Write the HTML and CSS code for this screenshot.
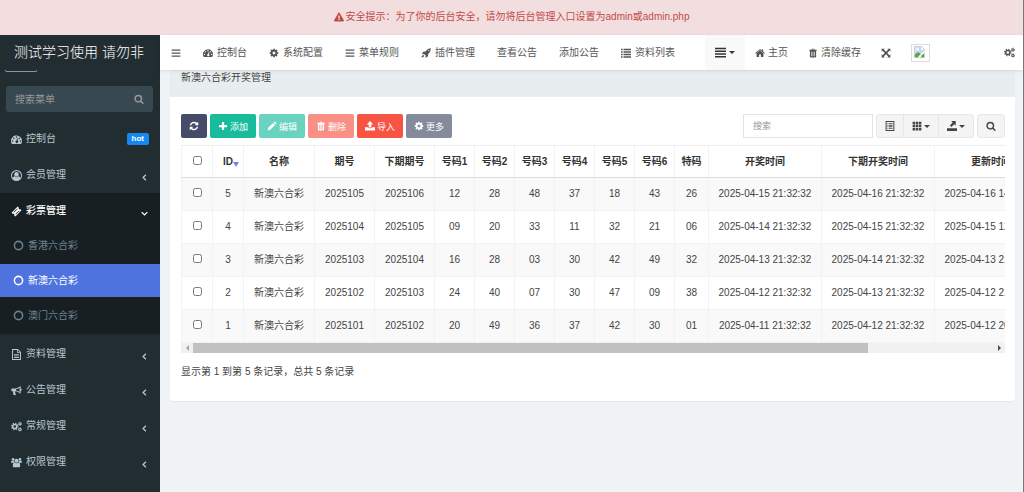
FILE: index.html
```html
<!DOCTYPE html>
<html lang="zh-CN">
<head>
    <meta charset="UTF-8">
    <meta name="viewport" content="width=device-width, initial-scale=1.0">
    <title>新澳六合彩开奖管理</title>
    <link rel="stylesheet" href="styles.css">
</head>
<body>
    <svg class="sprite" aria-hidden="true">
        <symbol id="warning" viewBox="0 0 576 512"><path d="M569.517 440.013C587.975 472.007 564.806 512 527.94 512H48.054c-36.937 0-59.999-40.055-41.577-71.987L246.423 23.985c18.467-32.009 64.72-31.951 83.154 0l239.94 416.028zM288 354c-25.405 0-46 20.595-46 46s20.595 46 46 46 46-20.595 46-46-20.595-46-46-46zm-43.673-165.346l7.418 136c.347 6.364 5.609 11.346 11.982 11.346h48.546c6.373 0 11.635-4.982 11.982-11.346l7.418-136c.375-6.874-5.098-12.654-11.982-12.654h-63.383c-6.884 0-12.356 5.78-11.981 12.654z"/></symbol>
        <symbol id="bars" viewBox="0 0 16 16"><path d="M1 2.2h14v2.2H1zM1 7h14v2.2H1zM1 11.8h14V14H1z"/></symbol>
        <symbol id="justify" viewBox="0 0 16 16"><path d="M0 1h16v2.3H0zM0 5h16v2.3H0zM0 9h16v2.3H0zM0 13h16v2.3H0z"/></symbol>
        <symbol id="list" viewBox="0 0 16 16"><path d="M0 1h2.6v2.4H0zM4 1h12v2.4H4zM0 5h2.6v2.4H0zM4 5h12v2.4H4zM0 9h2.6v2.4H0zM4 9h12v2.4H4zM0 13h2.6v2.4H0zM4 13h12v2.4H4z"/></symbol>
        <symbol id="dashboard" viewBox="0 0 16 16"><path fill-rule="evenodd" d="M8 2a8 8 0 0 1 8 8c0 1.500-.4 2.900-1.100 4.100-.2.300-.4.400-.7.400H1.800c-.3 0-.5-.1-.7-.4A8 8 0 0 1 8 2zM2.300 9a1.100 1.100 0 1 0 0 2.200 1.100 1.100 0 0 0 0-2.200zM4 5a1.100 1.100 0 1 0 0 2.200A1.100 1.100 0 0 0 4 5zm4-1.700a1.100 1.100 0 1 0 0 2.200 1.100 1.100 0 0 0 0-2.200zM12 5a1.100 1.100 0 1 0 0 2.200A1.100 1.100 0 0 0 12 5zm1.700 4a1.100 1.100 0 1 0 0 2.200 1.100 1.100 0 0 0 0-2.200zM9 6.500l-.8 3.100a1.800 1.800 0 1 0 1.300.3l.8-3.100z"/></symbol>
        <symbol id="cog" viewBox="0 0 1792 1792"><path d="M1152 896q0-106-75-181t-181-75-181 75-75 181 75 181 181 75 181-75 75-181zm512-109v222q0 12-8 23t-20 13l-185 28q-19 54-39 91 35 50 107 138 10 12 10 25t-9 23q-27 37-99 108t-94 71q-12 0-26-9l-138-108q-44 23-91 38-16 136-29 186-7 28-36 28h-222q-14 0-24.500-8.500t-11.500-21.500l-28-184q-49-16-90-37l-141 107q-10 9-25 9-14 0-25-11-126-114-165-168-7-10-7-23 0-12 8-23 15-21 51-66.500t54-70.500q-27-50-41-99l-183-27q-13-2-21-12.500t-8-23.500v-222q0-12 8-23t19-13l186-28q14-46 39-92-40-57-107-138-10-12-10-24 0-10 9-23 26-36 98.500-107.500t94.500-71.500q13 0 26 10l138 107q44-23 91-38 16-136 29-186 7-28 36-28h222q14 0 24.500 8.500t11.500 21.500l28 184q49 16 90 37l142-107q9-9 24-9 13 0 25 10 129 119 165 170 7 8 7 22 0 12-8 23-15 21-51 66.500t-54 70.500q26 50 41 98l183 28q13 2 21 12.500t8 23.500z"/></symbol>
        <symbol id="cogs" viewBox="0 0 16 16"><g fill="none" stroke="currentColor"><circle cx="5.500" cy="8" r="3" stroke-width="2.200"/><circle cx="5.500" cy="8" r="4.700" stroke-width="1.600" stroke-dasharray="1.900 1.790"/><circle cx="13" cy="4" r="1.600" stroke-width="1.500"/><circle cx="13" cy="4" r="2.600" stroke-width=".8" stroke-dasharray="1.360 1.360"/><circle cx="13" cy="12.300" r="1.600" stroke-width="1.500"/><circle cx="13" cy="12.300" r="2.600" stroke-width=".8" stroke-dasharray="1.360 1.360"/></g></symbol>
        <symbol id="rocket" viewBox="0 0 16 16"><path fill-rule="evenodd" d="M15.500.5c.2 3.800-.9 6.300-4 9.200l-.3 3.600-3.700 2.200-.5-.4.6-3-2.700-2.700-3 .6-.4-.5 2.200-3.700 3.600-.3C10 1.800 12.200.6 15.500.5zM12.400 2.600a1 1 0 1 0 0 2 1 1 0 0 0 0-2zM3.800 11l1.300 1.200c-.5 1.700-1.800 2.400-4.300 2.900.5-2.300 1.200-3.700 3-4.100z"/></symbol>
        <symbol id="home" viewBox="0 0 16 16"><path d="M8 3.800l5.500 4.600v5.300c0 .4-.3.600-.6.600H9.500v-4h-3v4H3.100c-.3 0-.6-.2-.6-.6V8.400zM8 1.500l2.700 2.200V2.200h2.300v3.500l2.700 2.300-.8 1L8 3.100 1.100 9l-.8-1z"/></symbol>
        <symbol id="trash" viewBox="0 0 16 16"><path fill-rule="evenodd" d="M6.300 1h3.400l1 1.800H14v1.700h-1v9.200c0 .8-.5 1.300-1.200 1.300H4.200C3.500 15 3 14.500 3 13.700V4.500H2V2.800h3.300zM7 2l-.4.800h2.800L9 2zM5.100 6v7h1V6zm2.400 0v7h1V6zm2.400 0v7h1V6z"/></symbol>
        <symbol id="expand" viewBox="0 0 16 16"><path d="M1 1h5L4.500 2.500 8 6l3.500-3.500L10 1h5v5l-1.500-1.500L10 8l3.500 3.500L15 10v5h-5l1.500-1.500L8 10l-3.500 3.500L6 15H1v-5l1.500 1.500L6 8 2.500 4.500 1 6z"/></symbol>
        <symbol id="search" viewBox="0 0 1792 1792"><path d="M1216 832q0-185-131.500-316.500t-316.500-131.500-316.500 131.500-131.500 316.500 131.500 316.500 316.500 131.500 316.500-131.500 131.500-316.500zm512 832q0 52-38 90t-90 38q-54 0-90-38l-343-342q-179 124-399 124-143 0-273.500-55.500t-225-150-150-225-55.500-273.500 55.500-273.500 150-225 225-150 273.500-55.500 273.500 55.500 225 150 150 225 55.500 273.500q0 220-124 399l343 343q37 37 37 90z"/></symbol>
        <symbol id="user" viewBox="0 0 16 16"><path fill-rule="evenodd" d="M8 0a8 8 0 1 1 0 16A8 8 0 0 1 8 0zm0 1.400a6.600 6.600 0 0 0-5.300 10.500c.3-1.600 1-2.700 2.300-2.900a4.400 4.400 0 0 0 6 0c1.300.2 2 1.300 2.300 2.900A6.600 6.600 0 0 0 8 1.400zM8 3a3.400 3.400 0 1 1 0 6.800A3.400 3.400 0 0 1 8 3z"/></symbol>
        <symbol id="ticket" viewBox="0 0 16 16"><path fill-rule="evenodd" d="M9.700.8l1.500 1.500a1.900 1.900 0 0 0 2.500 2.500l1.500 1.500-8.900 8.900-1.500-1.500a1.900 1.900 0 0 0-2.500-2.500L.8 9.700zM8.900 3.600L3.600 8.900l.7.700 5.300-5.300zM11.700 6.400l-5.300 5.300.7.700 5.300-5.300z"/></symbol>
        <symbol id="circle" viewBox="0 0 16 16"><circle cx="8" cy="8" r="6" fill="none" stroke="currentColor" stroke-width="2.200"/></symbol>
        <symbol id="file" viewBox="0 0 16 16"><path fill-rule="evenodd" d="M1.500 0h8.500l4.500 4.500V16h-13zM3 1.400v13.200h10V5.800H9V1.400zm7.200.3v2.900H13zM4.500 7.200h7v1.200h-7zm0 2.300h7v1.200h-7zm0 2.300h7V13h-7z"/></symbol>
        <symbol id="bullhorn" viewBox="0 0 16 16"><path fill-rule="evenodd" d="M14 1.500v4c1 0 1.600.7 1.600 1.500S15 8.500 14 8.500v4.300c-2.600-2.200-5-3.300-7.400-3.600-.9.700-.8 1.500-.1 2.300-.5.900.1 1.600 1.100 2.400-.7 1.300-3 1.300-3.900.4-.5-1.600-1-3.200-.5-5.200H2c-.9 0-1.600-.7-1.600-1.500V6.500C.4 5.600 1.100 5 2 5h4c2.600 0 5.300-1.200 8-3.500zm-1.500 3A13 13 0 0 1 7.300 6.300v1.600c1.800.3 3.500.9 5.200 1.900z"/></symbol>
        <symbol id="group" viewBox="0 0 16 16"><circle cx="3" cy="3.500" r="2"/><circle cx="13" cy="3.500" r="2"/><circle cx="8" cy="5.500" r="2.900"/><path d="M0 8.500C0 6.500.4 5.300 1.300 5.300c1.100.7 2.200.8 3.200.4C4.500 7 5 8 5.600 8.500zM16 8.500c0-2-.4-3.200-1.300-3.200-1.100.7-2.200.8-3.200.4C11.500 7 11 8 10.400 8.500zM5 8c2 1.300 4 1.300 6 0 1.700.3 2.400 2.400 2.400 5 0 1.200-.8 2-2 2H4.600c-1.200 0-2-.8-2-2 0-2.600.7-4.700 2.400-5z"/></symbol>
        <symbol id="angle-left" viewBox="0 0 16 16"><path d="M10.500 3L5.500 8l5 5" fill="none" stroke="currentColor" stroke-width="2.200"/></symbol>
        <symbol id="angle-down" viewBox="0 0 16 16"><path d="M3 5.500l5 5 5-5" fill="none" stroke="currentColor" stroke-width="2.200"/></symbol>
        <symbol id="refresh" viewBox="0 0 1792 1792"><path d="M1639 1056q0 5-1 7-64 268-268 434.500t-478 166.500q-146 0-282.500-55t-243.500-157l-129 129q-19 19-45 19t-45-19-19-45v-448q0-26 19-45t45-19h448q26 0 45 19t19 45-19 45l-137 137q71 66 161 102t187 36q134 0 250-65t186-179q11-17 53-117 8-23 30-23h192q13 0 22.500 9.500t9.500 22.500zm25-800v448q0 26-19 45t-45 19h-448q-26 0-45-19t-19-45 19-45l138-138q-148-137-349-137-134 0-250 65t-186 179q-11 17-53 117-8 23-30 23h-199q-13 0-22.500-9.500t-9.500-22.500v-7q65-268 270-434.500t480-166.500q146 0 284 55.500t245 156.500l130-129q19-19 45-19t45 19 19 45z"/></symbol>
        <symbol id="plus" viewBox="0 0 16 16"><path d="M6.200 1.500h3.600v4.700h4.700v3.600H9.800v4.700H6.200V9.800H1.500V6.200h4.700z"/></symbol>
        <symbol id="pencil" viewBox="0 0 16 16"><path d="M1 15l.9-4.200 7.700-7.700 3.300 3.300-7.700 7.700zM10.500 2.200l1.200-1.100c.5-.5 1.100-.5 1.600 0l1.600 1.600c.5.500.5 1.100 0 1.600l-1.100 1.200z"/></symbol>
        <symbol id="upload" viewBox="0 0 16 16"><path d="M8 0l5 5.500H10V10.500H6V5.500H3zM0 10h4.700c.3 1 1.200 1.700 3.300 1.700s3-.7 3.300-1.700H16v5H0z"/></symbol>
        <symbol id="detail" viewBox="0 0 16 16"><path fill-rule="evenodd" d="M1 0h14v16H1zm1.600 1.600v12.800h10.800V1.600zM4 3.500h1.500v1.400H4zm2.500 0H12v1.400H6.500zM4 6h1.500v1.400H4zm2.500 0H12v1.400H6.500zM4 8.500h1.500v1.400H4zm2.500 0H12v1.400H6.500zM4 11h1.500v1.400H4zm2.500 0H12v1.400H6.500z"/></symbol>
        <symbol id="grid" viewBox="0 0 16 16"><path d="M1 1h4v4H1zm5 0h4v4H6zm5 0h4v4h-4zM1 6h4v4H1zm5 0h4v4H6zm5 0h4v4h-4zM1 11h4v4H1zm5 0h4v4H6zm5 0h4v4h-4z"/></symbol>
        <symbol id="export" viewBox="0 0 16 16"><path d="M0 11.500h16V16H0zM6.500 0H14v7.500l-2.400-2.300L7 9.500 4.600 7l4.500-4.600z"/></symbol>
        <symbol id="broken" viewBox="0 0 16 16"><path d="M1.500.5h9l4 4v11h-13z" fill="#fff" stroke="#aab4bf"/><path d="M2.500 1.500H10V5h4v3l-5 3.500H2.500z" fill="#c3d5f3"/><path d="M2 14.500V11l4-3 4 3-4 4H2z" fill="#57a83f"/><circle cx="5.500" cy="4.500" r="1.700" fill="#fff"/><path d="M15 7l-8 8" stroke="#fff" stroke-width="2"/><path d="M11 12l3-2v5h-4z" fill="#57a83f"/></symbol>
    </svg>

    <div class="alert" role="alert"><svg class="icon"><use href="#warning"/></svg>安全提示：为了你的后台安全，请勿将后台管理入口设置为admin或admin.php</div>

    <div class="wrapper">
        <aside class="sidebar">
            <a class="logo" href="#">测试学习使用 请勿非</a>
            <div class="user-panel"></div>
            <form class="sidebar-form">
                <input type="text" placeholder="搜索菜单" aria-label="搜索菜单">
                <button type="button" aria-label="搜索"><svg class="icon"><use href="#search"/></svg></button>
            </form>
            <ul class="menu">
                <li><a href="#"><svg class="icon"><use href="#dashboard"/></svg>控制台<span class="badge">hot</span></a></li>
                <li><a href="#"><svg class="icon"><use href="#user"/></svg>会员管理<svg class="icon angle"><use href="#angle-left"/></svg></a></li>
                <li class="open">
                    <a href="#"><svg class="icon"><use href="#ticket"/></svg>彩票管理<svg class="icon angle"><use href="#angle-down"/></svg></a>
                    <ul class="submenu">
                        <li><a href="#"><svg class="icon"><use href="#circle"/></svg>香港六合彩</a></li>
                        <li class="active"><a href="#"><svg class="icon"><use href="#circle"/></svg>新澳六合彩</a></li>
                        <li><a href="#"><svg class="icon"><use href="#circle"/></svg>澳门六合彩</a></li>
                    </ul>
                </li>
                <li><a href="#"><svg class="icon"><use href="#file"/></svg>资料管理<svg class="icon angle"><use href="#angle-left"/></svg></a></li>
                <li><a href="#"><svg class="icon"><use href="#bullhorn"/></svg>公告管理<svg class="icon angle"><use href="#angle-left"/></svg></a></li>
                <li><a href="#"><svg class="icon"><use href="#cogs"/></svg>常规管理<svg class="icon angle"><use href="#angle-left"/></svg></a></li>
                <li><a href="#"><svg class="icon"><use href="#group"/></svg>权限管理<svg class="icon angle"><use href="#angle-left"/></svg></a></li>
            </ul>
        </aside>

        <main class="content">
            <nav class="navbar">
                <a class="toggle" href="#" aria-label="菜单"><svg class="icon"><use href="#bars"/></svg></a>
                <a href="#"><svg class="icon"><use href="#dashboard"/></svg>控制台</a>
                <a href="#"><svg class="icon"><use href="#cog"/></svg>系统配置</a>
                <a href="#"><svg class="icon"><use href="#bars"/></svg>菜单规则</a>
                <a href="#"><svg class="icon"><use href="#rocket"/></svg>插件管理</a>
                <a href="#">查看公告</a>
                <a href="#">添加公告</a>
                <a href="#"><svg class="icon"><use href="#list"/></svg>资料列表</a>
                <div class="nav-right">
                    <a class="tabs-toggle" href="#" aria-label="标签"><svg class="icon"><use href="#justify"/></svg><span class="caret"></span></a>
                    <a href="#"><svg class="icon"><use href="#home"/></svg>主页</a>
                    <a href="#"><svg class="icon"><use href="#trash"/></svg>清除缓存</a>
                    <a href="#" aria-label="全屏"><svg class="icon"><use href="#expand"/></svg></a>
                    <a href="#" aria-label="用户"><span class="avatar"><svg><use href="#broken"/></svg></span></a>
                    <a class="settings" href="#" aria-label="设置"><svg class="icon"><use href="#cogs"/></svg></a>
                </div>
            </nav>

            <section class="panel">
                <div class="panel-heading">新澳六合彩开奖管理</div>
                <div class="panel-body">
                    <div class="toolbar">
                        <button class="btn btn-primary" aria-label="刷新"><svg class="icon"><use href="#refresh"/></svg></button>
                        <button class="btn btn-success"><svg class="icon"><use href="#plus"/></svg>添加</button>
                        <button class="btn btn-success disabled"><svg class="icon"><use href="#pencil"/></svg>编辑</button>
                        <button class="btn btn-danger disabled"><svg class="icon"><use href="#trash"/></svg>删除</button>
                        <button class="btn btn-danger"><svg class="icon"><use href="#upload"/></svg>导入</button>
                        <button class="btn btn-primary disabled"><svg class="icon"><use href="#cog"/></svg>更多</button>
                        <input class="search" type="text" placeholder="搜索" aria-label="搜索">
                        <div class="btn-group">
                            <button aria-label="切换"><svg class="icon"><use href="#detail"/></svg></button>
                            <button aria-label="列"><svg class="icon"><use href="#grid"/></svg><span class="caret"></span></button>
                            <button aria-label="导出数据"><svg class="icon"><use href="#export"/></svg><span class="caret"></span></button>
                        </div>
                        <div class="btn-group">
                            <button aria-label="普通搜索"><svg class="icon"><use href="#search"/></svg></button>
                        </div>
                    </div>

                    <div class="table-wrap">
                        <table>
                            <colgroup>
                                <col class="c-check"><col class="c-check"><col class="c-name"><col class="c-issue"><col class="c-issue">
                                <col class="c-num"><col class="c-num"><col class="c-num"><col class="c-num"><col class="c-num"><col class="c-num">
                                <col class="c-special"><col class="c-time"><col class="c-time"><col class="c-time">
                            </colgroup>
                            <thead>
                                <tr><th><input type="checkbox" aria-label="全选"></th><th class="sort">ID</th><th>名称</th><th>期号</th><th>下期期号</th><th>号码1</th><th>号码2</th><th>号码3</th><th>号码4</th><th>号码5</th><th>号码6</th><th>特码</th><th>开奖时间</th><th>下期开奖时间</th><th>更新时间</th></tr>
                            </thead>
                            <tbody>
                                <tr><td><input type="checkbox" aria-label="选择 5"></td><td>5</td><td>新澳六合彩</td><td>2025105</td><td>2025106</td><td>12</td><td>28</td><td>48</td><td>37</td><td>18</td><td>43</td><td>26</td><td>2025-04-15 21:32:32</td><td>2025-04-16 21:32:32</td><td>2025-04-16 14:32:32</td></tr>
                                <tr><td><input type="checkbox" aria-label="选择 4"></td><td>4</td><td>新澳六合彩</td><td>2025104</td><td>2025105</td><td>09</td><td>20</td><td>33</td><td>11</td><td>32</td><td>21</td><td>06</td><td>2025-04-14 21:32:32</td><td>2025-04-15 21:32:32</td><td>2025-04-15 12:32:32</td></tr>
                                <tr><td><input type="checkbox" aria-label="选择 3"></td><td>3</td><td>新澳六合彩</td><td>2025103</td><td>2025104</td><td>16</td><td>28</td><td>03</td><td>30</td><td>42</td><td>49</td><td>32</td><td>2025-04-13 21:32:32</td><td>2025-04-14 21:32:32</td><td>2025-04-13 21:32:32</td></tr>
                                <tr><td><input type="checkbox" aria-label="选择 2"></td><td>2</td><td>新澳六合彩</td><td>2025102</td><td>2025103</td><td>24</td><td>40</td><td>07</td><td>30</td><td>47</td><td>09</td><td>38</td><td>2025-04-12 21:32:32</td><td>2025-04-13 21:32:32</td><td>2025-04-12 21:32:32</td></tr>
                                <tr><td><input type="checkbox" aria-label="选择 1"></td><td>1</td><td>新澳六合彩</td><td>2025101</td><td>2025102</td><td>20</td><td>49</td><td>36</td><td>37</td><td>42</td><td>30</td><td>01</td><td>2025-04-11 21:32:32</td><td>2025-04-12 21:32:32</td><td>2025-04-12 20:32:32</td></tr>
                            </tbody>
                        </table>
                    </div>
                    <div class="scrollbar">
                        <span class="arrow arrow-left"></span>
                        <div class="track"><div class="thumb"></div></div>
                        <span class="arrow arrow-right"></span>
                    </div>
                    <div class="pagination">显示第 1 到第 5 条记录，总共 5 条记录</div>
                </div>
            </section>
        </main>
    </div>
</body>
</html>
```

FILE: styles.css
```css
* {
    box-sizing: border-box;
}

body {
    margin: 0;
    min-height: 100vh;
    display: flex;
    flex-direction: column;
    border-right: 1px solid #777;
    background: #eff3f6;
    color: #444;
    font-family: "Liberation Sans", "Noto Sans CJK SC", sans-serif;
    font-size: 10px;
    line-height: 14px;
}

a {
    color: inherit;
    text-decoration: none;
}

ul {
    list-style: none;
    margin: 0;
    padding: 0;
}

button,
input {
    font-family: inherit;
    font-size: inherit;
    margin: 0;
}

button {
    cursor: pointer;
}

.sprite {
    display: none;
}

.icon {
    width: 10px;
    height: 10px;
    fill: currentColor;
    flex: none;
}

.caret {
    border: 3px solid transparent;
    border-top-color: currentColor;
    border-bottom: 0;
}

.alert {
    display: flex;
    align-items: center;
    justify-content: center;
    gap: 2px;
    height: 35px;
    padding-bottom: 2px;
    background: #f2dede;
    color: #c24a48;
}

.wrapper {
    display: flex;
    flex: 1;
}

/* sidebar */
.sidebar {
    width: 160px;
    flex: none;
    background: #222d32;
    color: #b8c7ce;
}

.logo {
    display: block;
    height: 35px;
    line-height: 35px;
    padding-right: 2px;
    font-size: 14px;
    font-weight: 300;
    text-align: center;
    white-space: nowrap;
    color: #fff;
}

.user-panel {
    width: 32px;
    height: 2px;
    margin-left: 5px;
    border: 1px solid #8b979c;
    border-top: 0;
    border-radius: 0 0 2px 2px;
}

.sidebar-form {
    display: flex;
    height: 26px;
    margin: 14px 7px 9px 6px;
    border-radius: 3px;
    background: #374850;
}

.sidebar-form input {
    flex: 1;
    min-width: 0;
    padding: 0 9px;
    border: 0;
    background: transparent;
    color: #fff;
}

.sidebar-form input::placeholder,
.search::placeholder {
    color: #999;
}

.sidebar-form button {
    display: flex;
    align-items: center;
    padding: 0 9px;
    border: 0;
    background: transparent;
    color: #999;
}

.menu a {
    display: flex;
    align-items: center;
    gap: 4px;
    height: 36px;
    padding: 0 11px;
}

.menu .icon {
    width: 11px;
    height: 11px;
}

.badge {
    margin-left: auto;
    padding: 0 5px;
    border-radius: 2px;
    background: #1688f1;
    color: #fff;
    font-size: 8px;
    line-height: 12px;
    font-weight: bold;
}

.menu .angle {
    width: 9px;
    height: 9px;
    margin: 5px 0 0 auto;
}

.menu .open {
    margin-bottom: 2px;
    background: #181f23;
}

.open > a {
    color: #fff;
    font-weight: 500;
}

.submenu {
    display: flex;
    flex-direction: column;
    gap: 2px;
    padding-bottom: 2px;
    color: #6b8290;
}

.submenu a {
    height: 33px;
    padding-left: 13px;
}

.submenu .active {
    background: #4e73df;
    color: #fff;
}

/* navbar */
.content {
    flex: 1;
    min-width: 0;
}

.navbar {
    position: relative;
    display: flex;
    height: 35px;
    background: #fff;
    color: #555;
    box-shadow: 0 1px 3px rgba(0, 0, 0, 0.1);
}

.navbar a {
    display: flex;
    align-items: center;
    gap: 4px;
    padding: 0 11px;
    white-space: nowrap;
}

.nav-right {
    display: flex;
    flex: 1;
    margin-left: 19px;
}

.nav-right a {
    gap: 3px;
    padding: 0 10px;
}

.nav-right .tabs-toggle {
    background: #f9f9f9;
    color: #333;
}

.tabs-toggle .icon {
    width: 11px;
    height: 11px;
}

.avatar {
    display: flex;
    padding: 1px 3px 3px 1px;
    border: 1px solid #ddd;
}

.avatar svg {
    width: 13px;
    height: 12px;
}

.nav-right .settings {
    margin-left: auto;
    padding-right: 8px;
}

.settings .icon {
    width: 11px;
    height: 11px;
}

/* panel */
.panel {
    margin: 0 8px 0 10px;
    border-radius: 3px;
    background: #fff;
    box-shadow: 0 1px 1px rgba(0, 0, 0, 0.05);
}

.panel-heading {
    padding: 1px 11px 12px;
    background: #e8edf0;
}

.panel-body {
    padding: 17px 10px 22px 11px;
}

.toolbar {
    display: flex;
    gap: 3px;
    height: 24px;
    margin-bottom: 7px;
}

.btn {
    display: flex;
    align-items: center;
    gap: 2px;
    padding: 0 8px;
    border: 0;
    border-radius: 2px;
    color: #fff;
    font-size: 9px;
}

.btn-primary {
    background: #444c69;
}

.btn-success {
    background: #18bc9c;
}

.btn-danger {
    background: #f75444;
}

.disabled {
    opacity: 0.65;
}

.search {
    width: 130px;
    margin-left: auto;
    padding: 0 9px;
    border: 1px solid #e1e3ea;
    font-size: 9px;
}

.btn-group {
    display: flex;
    border: 1px solid #e7e7e7;
    border-radius: 3px;
    background: #f4f4f4;
}

.btn-group button {
    display: flex;
    align-items: center;
    gap: 2px;
    padding: 0 8px;
    border: 0;
    background: transparent;
    color: #444;
}

.btn-group button + button {
    border-left: 1px solid #e7e7e7;
}

/* table */
.table-wrap {
    overflow: hidden;
}

table {
    width: 867px;
    table-layout: fixed;
    border-collapse: collapse;
}

.c-check { width: 31px; }
.c-name { width: 71px; }
.c-issue { width: 60px; }
.c-num { width: 40px; }
.c-special { width: 34px; }
.c-time { width: 113px; }

th,
td {
    height: 33px;
    padding: 0;
    border: 1px solid #f3f3f3;
    text-align: center;
    white-space: nowrap;
}

th {
    height: 32px;
    color: #333;
    border-top-color: #eee;
    border-bottom-color: #ddd;
}

.sort::after {
    content: "";
    display: inline-block;
    margin: 0 -6px -2px 0;
    border: 3px solid transparent;
    border-top: 5px solid #7b7fe8;
    border-bottom: 0;
}

tbody tr:nth-child(odd) {
    background: #f9f9f9;
}

td input,
th input {
    display: block;
    width: 9px;
    height: 9px;
    margin: 0 auto 3px;
}

.scrollbar {
    display: flex;
    align-items: center;
    height: 10px;
    background: #f1f1f1;
}

.track {
    flex: 1;
}

.thumb {
    height: 10px;
    margin-right: 125px;
    background: #c1c1c1;
}

.arrow {
    width: 3px;
    margin: 0 4px 0 5px;
    border: 3px solid transparent;
}

.arrow-left {
    border-right-color: #a3a3a3;
    border-left: 0;
}

.arrow-right {
    border-left-color: #505050;
    border-right: 0;
}

.pagination {
    padding-top: 12px;
}
```
